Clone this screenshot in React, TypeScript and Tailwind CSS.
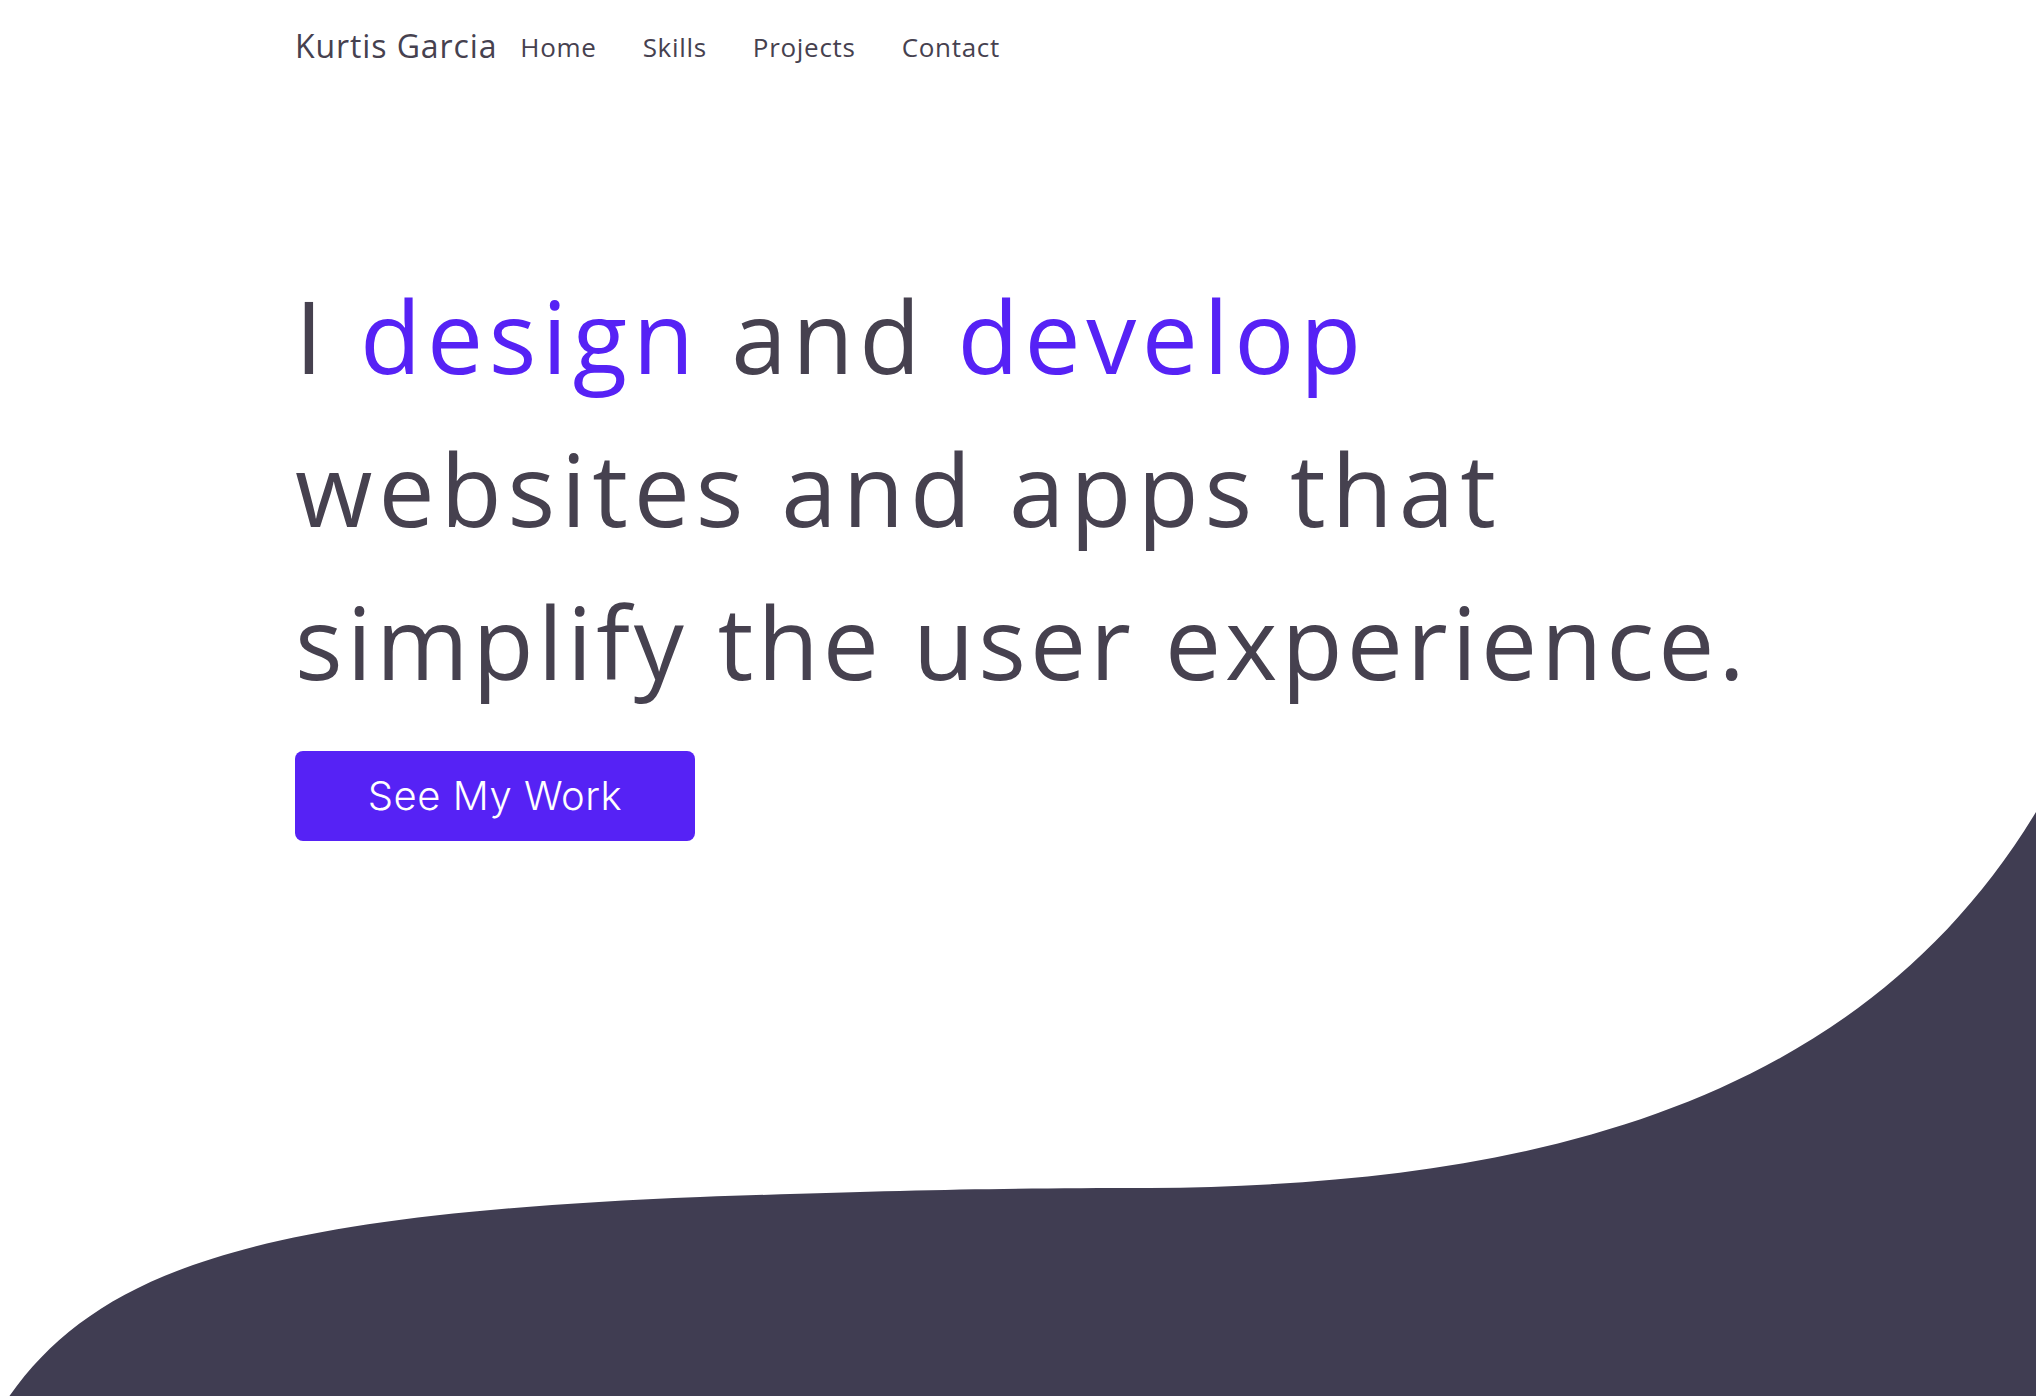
import React from "react"

const links = ["Home", "Skills", "Projects", "Contact"]

function Wave() {
  return (
    <svg
      className="pointer-events-none absolute inset-0 h-full w-full"
      viewBox="0 0 2036 1396"
      preserveAspectRatio="none"
      aria-hidden="true"
    >
      <path
        fill="#403d52"
        d="M0 1410 C90 1270 250 1215 700 1197 C900 1190 1000 1188 1150 1188 C1500 1185 1850 1120 2036 812 L2036 1396 L0 1396 Z"
      />
    </svg>
  )
}

export default function App() {
  return (
    <div className="relative h-[1396px] w-full overflow-hidden bg-white font-['Open_Sans',sans-serif] text-[#46414f]">
      <Wave />
      <div className="relative mx-auto w-[1446px]">
        <nav className="flex items-baseline pt-[22px]">
          <span className="text-[32px] leading-[48px] tracking-[0.9px]">Kurtis Garcia</span>
          <ul className="flex items-baseline">
            {links.map((l) => (
              <li key={l}>
                <a href="#" className="relative -top-px px-[23px] text-[26px] leading-[48px] tracking-[0.7px]">
                  {l}
                </a>
              </li>
            ))}
          </ul>
        </nav>

        <h1 className="mt-[187px] whitespace-nowrap text-[100px] leading-[153px]">
          <span className="block tracking-[5.6px]">
            I <span className="text-[#5622f5]">design</span> and{" "}
            <span className="text-[#5622f5]">develop</span>
          </span>
          <span className="block tracking-[5.9px]">websites and apps that</span>
          <span className="block tracking-[4px]">simplify the user experience.</span>
        </h1>

        <button className="mt-[33px] flex h-[90px] w-[400px] items-center justify-center rounded-lg bg-[#5622f5] font-['Inter',sans-serif] text-[40px] font-light tracking-[0.5px] text-white">
          See My Work
        </button>
      </div>
    </div>
  )
}
